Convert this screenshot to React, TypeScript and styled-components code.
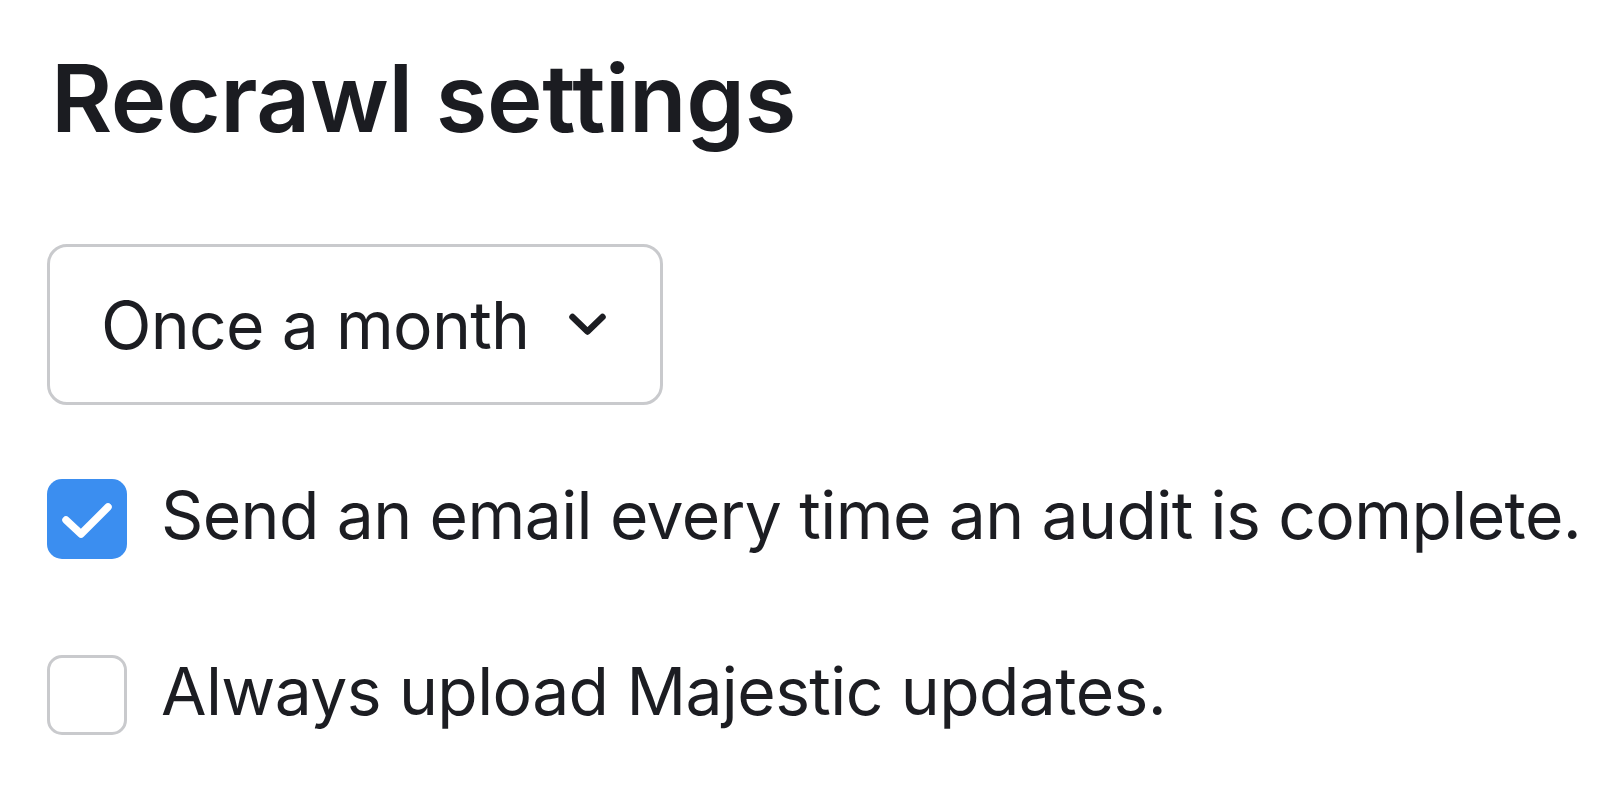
import React, { useState } from 'react';
import styled, { createGlobalStyle } from 'styled-components';

const GlobalStyle = createGlobalStyle`
  body {
    margin: 0;
    background: #ffffff;
    font-family: Inter, "Noto Sans", sans-serif;
    color: #1c1d22;
  }
`;

const Page = styled.div`
  display: flex;
  flex-direction: column;
  align-items: flex-start;
  padding: 42px 0 0 47px;
`;

const Title = styled.h1`
  margin: 0 0 0 4px;
  font-family: Inter, sans-serif;
  font-weight: 600;
  font-size: 94px;
  line-height: 112px;
  letter-spacing: -0.4px;
  white-space: nowrap;
  color: #1b1c21;
`;

const Select = styled.button`
  display: flex;
  align-items: center;
  gap: 39px;
  margin-top: 90px;
  height: 161px;
  padding: 0 53px 0 51px;
  background: #fff;
  border: 3px solid #c9cacd;
  border-radius: 20px;
  font-family: Inter, sans-serif;
  font-size: 66px;
  letter-spacing: -0.7px;
  white-space: nowrap;
  color: #1c1d22;
  cursor: pointer;
`;

const Options = styled.div`
  display: flex;
  flex-direction: column;
  gap: 96px;
  margin-top: 74px;
`;

const Row = styled.label`
  display: flex;
  align-items: center;
  gap: 34px;
  font-size: 66px;
  line-height: 80px;
  letter-spacing: -0.6px;
  white-space: nowrap;
  cursor: pointer;
`;

const Label = styled.span`
  margin-top: -8px;
`;

const Box = styled.span<{ $checked: boolean }>`
  display: flex;
  align-items: center;
  justify-content: center;
  flex: none;
  width: 80px;
  height: 80px;
  box-sizing: border-box;
  border-radius: 15px;
  background: ${(p) => (p.$checked ? '#3b8ef0' : '#ffffff')};
  border: ${(p) => (p.$checked ? 'none' : '3px solid #c9cacd')};
`;

function Chevron () {
  return (
    <svg width='39' height='25' viewBox='0 0 39 25' fill='none'>
      <path d='M4.5 5 L19.5 19.5 L34.5 5' stroke='#1c1d22' strokeWidth='6.5' strokeLinecap='round' strokeLinejoin='round' />
    </svg>
  );
}

function Check () {
  return (
    <svg width='80' height='80' viewBox='0 0 80 80' fill='none'>
      <path d='M19 41 L34 55 L61 28' stroke='#ffffff' strokeWidth='7.5' strokeLinecap='round' strokeLinejoin='round' />
    </svg>
  );
}

interface CheckRowProps {
  label: string;
  defaultChecked?: boolean;
}

function CheckRow ({ label, defaultChecked = false }: CheckRowProps) {
  const [checked, setChecked] = useState(defaultChecked);

  return (
    <Row onClick={() => setChecked(!checked)}>
      <Box $checked={checked}>{checked && <Check />}</Box>
      <Label>{label}</Label>
    </Row>
  );
}

export default function App () {
  return (
    <>
      <GlobalStyle />
      <Page>
        <Title>Recrawl settings</Title>
        <Select type='button'>
          Once a month
          <Chevron />
        </Select>
        <Options>
          <CheckRow label='Send an email every time an audit is complete.' defaultChecked />
          <CheckRow label='Always upload Majestic updates.' />
        </Options>
      </Page>
    </>
  );
}
